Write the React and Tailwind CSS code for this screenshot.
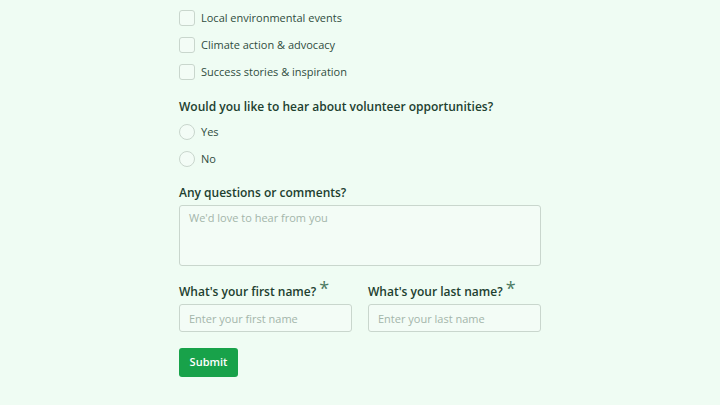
import React, { useState } from 'react';

const topics = [
  'Local environmental events',
  'Climate action & advocacy',
  'Success stories & inspiration',
];

const App = () => {
  const [checked, setChecked] = useState({});
  const [volunteer, setVolunteer] = useState('');

  return (
    <div className="min-h-screen w-full bg-[#effcf3] text-[#1f3a2d] font-['Open_Sans',sans-serif]">
      <form className="w-[362px] ml-[179px] pt-[10px]" onSubmit={(e) => e.preventDefault()}>
        <div className="flex flex-col gap-[11px]">
          {topics.map((t) => (
            <label key={t} className="flex items-center gap-[6px] h-4 cursor-pointer">
              <input
                type="checkbox"
                checked={!!checked[t]}
                onChange={() => setChecked({ ...checked, [t]: !checked[t] })}
                className="appearance-none w-4 h-4 rounded-[3px] border border-[#c9d6cd] bg-[#f3fcf6]"
              />
              <span className="text-[11px] font-medium text-[#2f4d3e]">{t}</span>
            </label>
          ))}
        </div>

        <p className="mt-[18px] text-[12px] leading-[18px] font-semibold text-[#21402f]">
          Would you like to hear about volunteer opportunities?
        </p>
        <div className="mt-[8px] flex flex-col gap-[11px]">
          {['Yes', 'No'].map((o) => (
            <label key={o} className="flex items-center gap-[6px] h-4 cursor-pointer">
              <input
                type="radio"
                name="volunteer"
                checked={volunteer === o}
                onChange={() => setVolunteer(o)}
                className="appearance-none w-4 h-4 rounded-full border border-[#c9d6cd] bg-[#f3fcf6]"
              />
              <span className="text-[11px] font-medium text-[#2f4d3e]">{o}</span>
            </label>
          ))}
        </div>

        <p className="mt-[17px] text-[12px] leading-[18px] font-semibold text-[#21402f]">Any questions or comments?</p>
        <textarea
          placeholder="We'd love to hear from you"
          className="mt-[3px] block w-full h-[61px] resize-none rounded-[3px] border border-[#c9d6cd] bg-[#f3fcf6] px-[9px] py-[4px] text-[11px] leading-[16px] placeholder:text-[#a3b5aa] outline-none"
        />

        <div className="mt-[17px] grid grid-cols-2 gap-4">
          <div>
            <p className="text-[12px] leading-[18px] font-semibold text-[#21402f]">
              What's your first name? <span className="text-[#4c7a62] text-[18px] leading-[10px] font-normal align-[1px]">*</span>
            </p>
            <input
              placeholder="Enter your first name"
              className="mt-[3px] block w-full h-[28px] rounded-[3px] border border-[#c9d6cd] bg-[#f3fcf6] px-[9px] text-[11px] placeholder:text-[#a3b5aa] outline-none"
            />
          </div>
          <div>
            <p className="text-[12px] leading-[18px] font-semibold text-[#21402f]">
              What's your last name? <span className="text-[#4c7a62] text-[18px] leading-[10px] font-normal align-[1px]">*</span>
            </p>
            <input
              placeholder="Enter your last name"
              className="mt-[3px] block w-full h-[28px] rounded-[3px] border border-[#c9d6cd] bg-[#f3fcf6] px-[9px] text-[11px] placeholder:text-[#a3b5aa] outline-none"
            />
          </div>
        </div>

        <button
          type="submit"
          className="mt-[16px] w-[59px] h-[29px] rounded-[3px] bg-[#18a24a] text-white text-[11px] font-semibold"
        >
          Submit
        </button>
      </form>
    </div>
  );
};

export default App;
